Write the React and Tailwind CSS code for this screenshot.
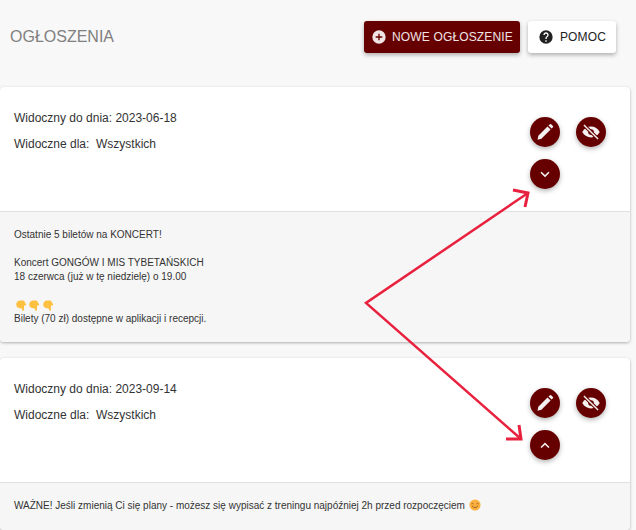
import React from "react";

const Round = ({ children }) => (
  <button className="w-[30px] h-[30px] rounded-full bg-[#660000] text-[#f5f0f0] flex items-center justify-center shadow-[0_2px_5px_rgba(0,0,0,0.3)]">
    {children}
  </button>
);

const Pencil = () => (
  <svg width="20" height="20" viewBox="0 0 24 24" fill="currentColor">
    <path d="M3 21.2 L4 16.4 L15 5.4 L18.7 9.1 L7.7 20.1 Z" />
    <path d="M16.2 4.2 L17.9 2.6 A1 1 0 0 1 19.3 2.6 L21.5 4.8 A1 1 0 0 1 21.5 6.2 L19.9 7.9 Z" />
  </svg>
);
const EyeOff = () => (
  <svg width="20" height="20" viewBox="0 0 24 24">
    <path d="M1.5 12 C4 7.5 8 5.5 12 5.5 C16 5.5 20 7.5 22.5 12 C20 16.5 16 18.5 12 18.5 C8 18.5 4 16.5 1.5 12 Z" fill="#f5f0f0" />
    <circle cx="12" cy="12" r="3.4" fill="#660000" />
    <path d="M3.5 3.5 L20.5 20.5" stroke="#660000" strokeWidth="4.2" />
    <path d="M3.5 3.5 L20.5 20.5" stroke="#f5f0f0" strokeWidth="1.7" />
  </svg>
);
const Chevron = ({ up }) => (
  <svg width="18" height="18" viewBox="0 0 24 24" fill="currentColor">
    {up
      ? <path d="M12 8.6l-6 6 1.5 1.5 4.5-4.5 4.5 4.5 1.5-1.5z" />
      : <path d="M7.5 8.9L12 13.4l4.5-4.5 1.5 1.5-6 6-6-6z" />}
  </svg>
);

const Hand = () => (
  <svg width="13.3" height="13" viewBox="0 0 13.3 13" fill="#fdc040">
    <path d="M2.2 5.8 C2.2 3.2 4 1.6 6 1.6 H9 C10 1.6 10.8 2.4 10.8 3.4 L12 5 C12.6 5.8 11.9 6.8 11 6.5 L10.2 6.2 L9.8 11.2 C9.7 12.2 8.4 12.2 8.2 11.2 L7.8 9.4 C4.5 9.6 2.2 8.2 2.2 5.8 Z" />
  </svg>
);
const Smile = () => (
  <svg width="12" height="12" viewBox="0 0 14 14">
    <circle cx="7" cy="7" r="6.5" fill="#fbb040" />
    <path d="M2.8 5.8 Q4 4.4 5.3 5.8 M8.7 5.8 Q10 4.4 11.2 5.8" stroke="#8a5a20" strokeWidth="1" fill="none" />
    <path d="M3.5 8 Q7 12 10.5 8" stroke="#8a5a20" strokeWidth="1" fill="none" />
  </svg>
);

const Card = ({ date, up, children, bodyClass }) => (
  <section className="mr-[6px] rounded-[4px] bg-white shadow-[0_1px_3px_rgba(0,0,0,0.3)]">
    <div className={`flex justify-between pl-[14px] pr-[24px] ${bodyClass}`}>
      <div className="pt-[21px] text-[12px] leading-[20px] text-[#333333]">
        <div>Widoczny do dnia: {date}</div>
        <div className="mt-[6px] whitespace-pre">Widoczne dla:  Wszystkich</div>
      </div>
      <div className="pt-[30px] w-[76px] flex flex-wrap gap-x-[16px] gap-y-[12px] content-start">
        <Round><Pencil /></Round>
        <Round><EyeOff /></Round>
        <Round><Chevron up={up} /></Round>
      </div>
    </div>
    <div className="border-t border-[#e0e0e0] bg-[#f6f6f6] rounded-b-[4px] px-[14px] text-[10px] leading-[14px] text-[#333333]">
      {children}
    </div>
  </section>
);

export default function App() {
  return (
    <div className="relative w-[636px] h-[530px] overflow-hidden bg-[#f8f8f8] font-['Liberation_Sans',sans-serif]">
      <header className="h-[87px] flex items-start justify-between pl-[10px] pr-[20px] pt-[21px]">
        <h1 className="mt-[5px] text-[16px] leading-[22px] text-[#808080] font-normal">OGŁOSZENIA</h1>
        <div className="flex gap-[8px]">
          <button className="h-[32px] w-[156px] rounded-[3px] bg-[#660000] text-[#f0e4e4] flex items-center justify-center gap-[5px] text-[12px] tracking-[0.15px] shadow-[0_2px_4px_rgba(0,0,0,0.3)]">
            <svg width="16" height="16" viewBox="0 0 24 24" fill="currentColor"><path d="M12 2a10 10 0 1 0 0 20 10 10 0 0 0 0-20zm5 11h-4v4h-2v-4H7v-2h4V7h2v4h4v2z" /></svg>
            NOWE OGŁOSZENIE
          </button>
          <button className="h-[32px] w-[88px] rounded-[3px] bg-white text-[#222222] flex items-center justify-center gap-[6px] text-[12px] tracking-[0.15px] shadow-[0_2px_4px_rgba(0,0,0,0.3)]">
            <svg width="16" height="16" viewBox="0 0 24 24" fill="currentColor"><path d="M12 2a10 10 0 1 0 0 20 10 10 0 0 0 0-20zm1 17h-2v-2h2v2zm2.07-7.75l-.9.92C13.45 12.9 13 13.5 13 15h-2v-.5c0-1.1.45-2.1 1.17-2.83l1.24-1.26c.37-.36.59-.86.59-1.41 0-1.1-.9-2-2-2s-2 .9-2 2H8c0-2.21 1.79-4 4-4s4 1.79 4 4c0 .88-.36 1.68-.93 2.25z" /></svg>
            POMOC
          </button>
        </div>
      </header>
      <div className="flex flex-col gap-[16px]">
        <Card date="2023-06-18" bodyClass="h-[124px]">
          <div className="h-[130px] pt-[16px]">
            <div>Ostatnie 5 biletów na KONCERT!</div>
            <div className="mt-[14px]">Koncert GONGÓW I MIS TYBETAŃSKICH</div>
            <div>18 czerwca (już w tę niedzielę) o 19.00</div>
            <div className="mt-[14px] flex h-[14px] items-center"><Hand /><Hand /><Hand /></div>
            <div>Bilety (70 zł) dostępne w aplikacji i recepcji.</div>
          </div>
        </Card>
        <Card date="2023-09-14" up bodyClass="h-[124px]">
          <div className="h-[47px] pt-[16px] flex items-start gap-[4px]">
            <span>WAŻNE! Jeśli zmienią Ci się plany - możesz się wypisać z treningu najpóźniej 2h przed rozpoczęciem</span>
            <Smile />
          </div>
        </Card>
      </div>
      <svg className="absolute left-0 top-0 pointer-events-none" width="636" height="530" fill="none" stroke="#e8213f" strokeWidth="2.5">
        <path d="M528 193 L366 303 L521 439" />
        <path d="M513 190 L528 193 L525 207" strokeWidth="3" />
        <path d="M506 439 L521 439 L519 425" strokeWidth="3" />
      </svg>
    </div>
  );
}
